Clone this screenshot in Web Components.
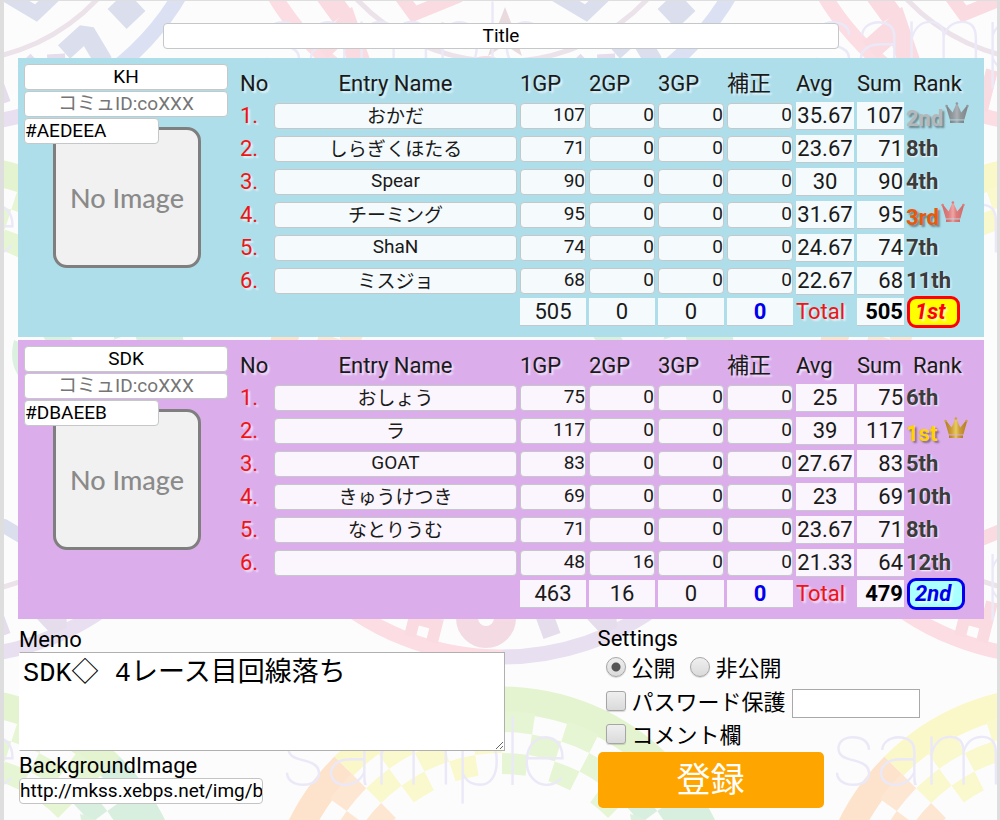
<!DOCTYPE html>
<html lang="ja">
<head>
<meta charset="utf-8">
<meta name="viewport" content="width=device-width, initial-scale=1">
<title>Title</title>
<style>
  html { background: #dedede; }
  body { margin: 0; font-family: Roboto, "Noto Sans CJK JP", sans-serif; font-size: 22px; color: #000; }
</style>
</head>
<body>
<score-page>
  <title-field slot="title" value="Title"></title-field>
  <team-panel name="KH" color="#AEDEEA"></team-panel>
  <team-panel name="SDK" color="#DBAEEB"></team-panel>
  <memo-form slot="memo"></memo-form>
  <settings-form slot="settings"></settings-form>
</score-page>

<script>
const FIELD = `
  *, *::before, *::after { box-sizing: border-box; }
  .field {
    display: block; width: 100%; height: 26px; margin: 0; padding: 0 0 2px;
    border: 1px solid #c4c8c8; border-radius: 4px; background: #fff;
    font: 19px/22px Roboto, "Noto Sans CJK JP", sans-serif; color: #000;
  }
  .field::placeholder { color: #757575; opacity: 1; }
`;

class BaseElement extends HTMLElement {
  constructor() {
    super();
    this.attachShadow({ mode: "open" });
  }
  connectedCallback() {
    this.shadowRoot.innerHTML = this.render();
  }
}

/* Tiled round emblem with a "sample" watermark behind the whole page. */
customElements.define("emblem-backdrop", class extends BaseElement {
  render() {
    const polar = (r, deg) => {
      const a = deg * Math.PI / 180;
      return `${(Math.cos(a) * r).toFixed(1)} ${(Math.sin(a) * r).toFixed(1)}`;
    };
    const block = (r1, r2, a1, a2, fill) =>
      `<path fill="${fill}" d="M${polar(r1, a1)}L${polar(r2, a1)}A${r2} ${r2} 0 0 1 ${polar(r2, a2)}L${polar(r1, a2)}A${r1} ${r1} 0 0 0 ${polar(r1, a1)}Z"/>`;
    let checks = "";
    for (let ring = 0; ring < 3; ring++)
      for (let i = 0; i < 20; i++) {
        if ((i + ring) % 2) continue;
        const a = 180 + i * 9;
        checks += block(150 + ring * 21, 171 + ring * 21, a, a + 9, a < 225 ? "#fde6d2" : a < 270 ? "#faf8cd" : a < 315 ? "#e6f5d3" : "#d8efdf");
      }
    return `
    <style>
      :host { display: block; overflow: hidden; }
      svg { display: block; width: 100%; height: 100%; }
      text { font: 100 90px Roboto, sans-serif; fill: #ebe9f8; }
    </style>
    <svg aria-hidden="true">
      <defs>
        <pattern id="tile" width="550" height="532" patternUnits="userSpaceOnUse" patternTransform="translate(223 141)">
          <g transform="translate(275 250)">
            <g fill="none">
              <path d="M-265 0A265 265 0 0 0 0 265" stroke="#fbdde3" stroke-width="15"/>
              <path d="M0 265A265 265 0 0 0 160 211" stroke="#e8e0f0" stroke-width="15"/>
              <path d="M160 211A265 265 0 0 0 265 0" stroke="#dbe1f2" stroke-width="15"/>
              <path d="M-198 30A200 200 0 0 0 198 30" stroke="#ece3ea" stroke-width="5"/>
              <path d="M-224 0A224 224 0 0 1 -158 -158" stroke="#fde3cb" stroke-width="27"/>
              <path d="M-158 -158A224 224 0 0 1 0 -224" stroke="#faf8c8" stroke-width="27"/>
              <path d="M0 -224A224 224 0 0 1 158 -158" stroke="#e5f4d0" stroke-width="27"/>
              <path d="M158 -158A224 224 0 0 1 224 0" stroke="#d8efdf" stroke-width="27"/>
            </g>
            ${checks}
            <g fill="none">
              <g stroke="#fadbe2">
                <path d="M-176 134L-160 156M-182 190L-155 166L-142 204" stroke-width="22"/>
                <path d="M-104 132L-88 154L-44 136" stroke-width="14" stroke-linecap="round"/>
                <path d="M-82 205L-92 244M-60 210L-70 250M-88 226L-66 232" stroke-width="12"/>
                <circle cx="-16" cy="226" r="19" stroke="#f4dae3" stroke-width="22"/>
              </g>
              <g stroke="#dbdfed">
                <path d="M52 134L84 153L104 134" stroke-width="14" stroke-linecap="round"/>
                <path d="M165 140L184 160" stroke-width="26"/>
                <path d="M112 192L134 172L152 202" stroke-width="18" stroke-linejoin="bevel"/>
                <path d="M36 206L50 244M72 200L106 236L104 194" stroke="#e5dcec" stroke-width="18" stroke-linejoin="bevel"/>
              </g>
            </g>
            <path d="M3 147L10 165H28L14 177L20 196L3 185L-14 196L-8 177L-22 165H-4Z" fill="#e8dadd"/>
            <path d="M84 -74q38 4 42 40q-34 -4 -42 -40zM128 -110q38 8 38 44q-34 -6 -38 -44zM62 -52q-10 40 32 54q2 -42 -32 -54z" fill="#dcf0e0"/>
          </g>
          <text x="54" y="111">sample</text>
          <text x="34" y="460">sample</text>
        </pattern>
      </defs>
      <rect width="100%" height="100%" fill="#fcfcfc"/>
      <rect width="100%" height="100%" fill="url(#tile)"/>
    </svg>`;
  }
});

customElements.define("score-page", class extends BaseElement {
  render() {
    return `
    <style>
      :host {
        display: block; position: relative; box-sizing: border-box; min-height: 100vh;
        border: solid #dedede; border-width: 1px 3px 2px 4px; padding: 22px 13px 12px 14px;
      }
      emblem-backdrop { position: absolute; inset: 0; }
      main { position: relative; }
      .title { width: 70%; margin: 0 auto 9px; }
      .teams { display: flex; flex-direction: column; gap: 3px; }
      .bottom { display: grid; grid-template-columns: 60% 40%; padding-top: 8px; align-items: start; }
    </style>
    <emblem-backdrop></emblem-backdrop>
    <main>
      <div class="title"><slot name="title"></slot></div>
      <div class="teams"><slot></slot></div>
      <div class="bottom"><slot name="memo"></slot><slot name="settings"></slot></div>
    </main>`;
  }
});

customElements.define("title-field", class extends BaseElement {
  render() {
    return `
    <style>${FIELD}
      :host { display: block; }
      .field { text-align: center; }
    </style>
    <input class="field" type="text" aria-label="Title" value="${this.getAttribute("value")}">`;
  }
});

customElements.define("crown-icon", class extends BaseElement {
  render() {
    const [light, mid, dark] = {
      gold: ["#e6cc62", "#cf9f38", "#b07c22"],
      silver: ["#abb0b4", "#92989c", "#7d8286"],
      bronze: ["#efa5a5", "#de7c7c", "#d06a6a"]
    }[this.getAttribute("metal")];
    return `
    <style>
      :host { display: block; }
      svg { display: block; width: 24px; height: 22px; }
    </style>
    <svg viewBox="0 0 24 22" aria-hidden="true">
      <defs><linearGradient id="g" x1="0" x2="1">
        <stop offset="0" stop-color="${dark}"/><stop offset=".3" stop-color="${mid}"/>
        <stop offset=".5" stop-color="${light}"/><stop offset=".65" stop-color="${mid}"/><stop offset="1" stop-color="${dark}"/>
      </linearGradient></defs>
      <g fill="url(#g)">
        <path d="M1 4.4L2.4 4L7.6 10.4L11.3 2H12.5L16.2 10.4L21.6 4L23 4.4L19.4 17.6H4.8Z"/>
        <path d="M5 18.4H19V21H5Z"/>
      </g>
      <g fill="${mid}"><circle cx="1.6" cy="4" r="1.3"/><circle cx="11.9" cy="1.5" r="1.3"/><circle cx="22.4" cy="4" r="1.3"/></g>
    </svg>`;
  }
});

customElements.define("rank-label", class extends BaseElement {
  render() {
    const rank = this.textContent.trim();
    const metal = { "1st": "gold", "2nd": "silver", "3rd": "bronze" }[rank];
    return `
    <style>
      :host { display: flex; align-items: flex-start; height: 28px; font-weight: 700; color: #3c3c3c; line-height: 28px; margin-left: -1px; }
      span { text-shadow: 1px 1px 2px rgba(255,255,255,.9); }
      .medal { line-height: 34px; padding-right: 2px; text-shadow: 2px 2px 2px rgba(0,0,0,.4); }
      .gold { color: #ffd400; padding-right: 7px; }
      .silver { color: #b4b8bb; }
      .bronze { color: #e8590c; }
    </style>
    <span class="${metal ? "medal " + metal : ""}"><slot></slot></span>${metal ? `<crown-icon metal="${metal}"></crown-icon>` : ""}`;
  }
});

customElements.define("place-badge", class extends BaseElement {
  render() {
    return `
    <style>
      :host { display: block; }
      b {
        display: block; box-sizing: border-box; width: max-content; min-width: 53px; margin: -2px 0;
        padding: 0 11px 0 5px; border: 3px solid red; border-radius: 9px; background: #ff0; color: red;
        font-style: italic; line-height: 26px;
      }
      :host([place="2nd"]) b { border-color: #00e; background: #aff; color: #00e; }
    </style>
    <b>${this.getAttribute("place")}</b>`;
  }
});

const TEAMS = {
  KH: {
    rows: [
      ["おかだ", 107, 0, 0, 0, "35.67", 107, "2nd"],
      ["しらぎくほたる", 71, 0, 0, 0, "23.67", 71, "8th"],
      ["Spear", 90, 0, 0, 0, "30", 90, "4th"],
      ["チーミング", 95, 0, 0, 0, "31.67", 95, "3rd"],
      ["ShaN", 74, 0, 0, 0, "24.67", 74, "7th"],
      ["ミスジョ", 68, 0, 0, 0, "22.67", 68, "11th"]
    ],
    totals: [505, 0, 0, 0, 505], place: "1st"
  },
  SDK: {
    rows: [
      ["おしょう", 75, 0, 0, 0, "25", 75, "6th"],
      ["ラ", 117, 0, 0, 0, "39", 117, "1st"],
      ["GOAT", 83, 0, 0, 0, "27.67", 83, "5th"],
      ["きゅうけつき", 69, 0, 0, 0, "23", 69, "10th"],
      ["なとりうむ", 71, 0, 0, 0, "23.67", 71, "8th"],
      ["", 48, 16, 0, 0, "21.33", 64, "12th"]
    ],
    totals: [463, 16, 0, 0, 479], place: "2nd"
  }
};

customElements.define("team-panel", class extends BaseElement {
  render() {
    const name = this.getAttribute("name"), color = this.getAttribute("color");
    const { rows, totals, place } = TEAMS[name];
    const gps = ["1GP", "2GP", "3GP", "補正"];
    const body = rows.map(([entry, ...v], i) => `
      <tr>
        <td class="no">${i + 1}.</td>
        <td><input class="field entry" type="text" aria-label="Entry Name ${i + 1}" value="${entry}"></td>
        ${gps.map((g, k) => `<td><input class="field score" type="text" inputmode="numeric" aria-label="${g} ${i + 1}" value="${v[k]}"></td>`).join("")}
        <td><span class="box">${v[4]}</span></td>
        <td><span class="box sum">${v[5]}</span></td>
        <td><rank-label>${v[6]}</rank-label></td>
      </tr>`).join("");
    return `
    <style>${FIELD}
      :host { display: grid; grid-template-columns: 204px minmax(0, 1fr); column-gap: 9px; background: ${color}; padding: 0 12px 0 6px; }
      .team { padding-top: 6px; }
      .team .field { margin-bottom: 1px; text-align: center; }
      .team .color { position: relative; width: 135px; text-align: left; }
      .image {
        display: grid; place-items: center; width: 148px; height: 141px; margin: -18px 0 0 29px;
        border: 3px solid #7f7f7f; border-radius: 14px; background: #f1f1f1;
        font: 500 27px/32px Lato, "Open Sans", sans-serif; color: #8a8a8a;
      }
      table { width: 100%; table-layout: fixed; border-collapse: separate; border-spacing: 3px 0; margin: 11px 0; text-shadow: 2px 2px 2px rgba(255,255,255,.7); }
      th, td { padding: 0; vertical-align: middle; line-height: 28px; white-space: nowrap; }
      th { height: 30px; font-weight: 400; text-align: left; color: #1a1a1a; }
      td { height: 33px; }
      th.name { text-align: center; }
      th.rank { padding-left: 6px; }
      .no { color: #f01414; }
      td .field { background: rgba(255,255,255,.88); color: #1a1a1a; }
      .entry { text-align: center; }
      .score { text-align: right; }
      .box { display: block; height: 28px; background: rgba(255,255,255,.88); border-bottom: 1px solid #c4c8cc; line-height: 28px; text-align: center; color: #1a1a1a; text-shadow: none; }
      .sum { text-align: right; padding-right: 1px; }
      tfoot td { height: 29px; }
      .fix { color: #00e; font-weight: 700; }
      .all { font-weight: 700; color: #000; }
      .total { color: #f01414; }
    </style>
    <div class="team">
      <input class="field" type="text" aria-label="Team name" value="${name}">
      <input class="field" type="text" aria-label="コミュID" placeholder="コミュID:coXXX">
      <input class="field color" type="text" aria-label="Color" value="${color}">
      <div class="image">No Image</div>
    </div>
    <table>
      <colgroup><col style="width:31px"><col><col style="width:66px"><col style="width:66px"><col style="width:66px"><col style="width:66px"><col style="width:58px"><col style="width:47px"><col style="width:62px"></colgroup>
      <thead><tr><th>No</th><th class="name">Entry Name</th>${gps.map(g => `<th>${g}</th>`).join("")}<th>Avg</th><th>Sum</th><th class="rank">Rank</th></tr></thead>
      <tbody>${body}</tbody>
      <tfoot><tr>
        <td></td><td></td>
        ${totals.slice(0, 4).map((t, k) => `<td><span class="box${k === 3 ? " fix" : ""}">${t}</span></td>`).join("")}
        <td class="total">Total</td>
        <td><span class="box sum all">${totals[4]}</span></td>
        <td><place-badge place="${place}"></place-badge></td>
      </tr></tfoot>
    </table>`;
  }
});

customElements.define("memo-form", class extends BaseElement {
  render() {
    return `
    <style>${FIELD}
      :host { display: block; padding-left: 1px; }
      label { display: block; line-height: 25px; }
      textarea {
        display: block; width: 84%; height: 99px; margin: 0 0 2px; padding: 5px 3px; border: 1px solid #b0b0b0; border-left-color: #fff;
        background: #fff; color: #000; font: 27px/32px "Liberation Mono", "Noto Sans CJK JP", monospace;
      }
      .field { width: 244px; border-color: #c4c4c4; }
    </style>
    <label for="memo">Memo</label>
    <textarea id="memo">SDK◇ 4レース目回線落ち</textarea>
    <label for="bg">BackgroundImage</label>
    <input id="bg" class="field" type="text" value="http://mkss.xebps.net/img/bg.png">`;
  }
});

customElements.define("settings-form", class extends BaseElement {
  render() {
    return `
    <style>${FIELD}
      :host { display: block; }
      fieldset { margin: 0; padding: 0; border: 0; min-width: 0; }
      legend { padding: 0; line-height: 23px; height: 25px; }
      .row { display: flex; align-items: center; height: 34px; padding-left: 8px; gap: 6px; }
      .row:last-child { height: 32px; }
      label { display: flex; align-items: center; gap: 6px; font-size: 22px; line-height: 32px; white-space: nowrap; }
      label + label { margin-left: 8px; }
      input[type=radio], input[type=checkbox] {
        appearance: none; width: 20px; height: 20px; margin: 0 0 4px; border: 1px solid #a6a6a6; border-radius: 3px;
        background: linear-gradient(#efefef, #dadada); box-shadow: 0 1px 1px rgba(0,0,0,.15);
      }
      input[type=radio] { border-radius: 50%; }
      input[type=radio]:checked { background: radial-gradient(circle, #555 0 4px, transparent 5px), linear-gradient(#efefef, #dadada); }
      .password { width: 128px; height: 29px; border: 1px solid #a9a9a9; border-radius: 0; }
      button {
        display: block; width: 226px; height: 56px; padding: 0; border: 0; border-radius: 5px; background: #ffa500; color: #fff;
        font: 34px/54px Roboto, "Noto Sans CJK JP", sans-serif;
      }
    </style>
    <form onsubmit="return false">
      <fieldset>
        <legend>Settings</legend>
        <div class="row">
          <label><input type="radio" name="visibility" checked>公開</label>
          <label><input type="radio" name="visibility">非公開</label>
        </div>
        <div class="row">
          <label><input type="checkbox">パスワード保護</label>
          <input class="field password" type="text" aria-label="パスワード">
        </div>
        <div class="row"><label><input type="checkbox">コメント欄</label></div>
      </fieldset>
      <button type="submit">登録</button>
    </form>`;
  }
});
</script>
</body>
</html>
